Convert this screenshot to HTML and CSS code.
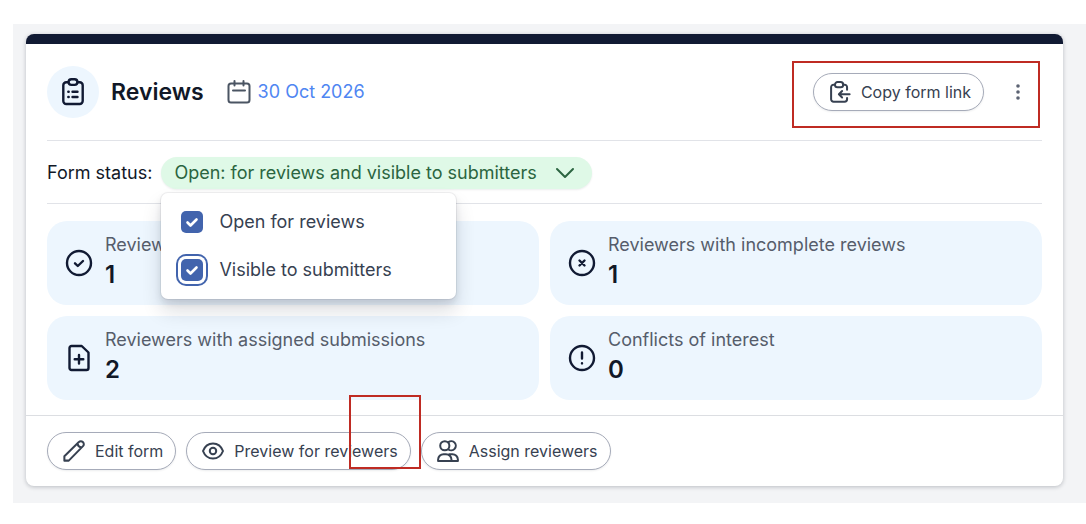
FILE: index.html
```html
<!DOCTYPE html>
<html lang="en">
<head>
<meta charset="utf-8">
<title>Reviews</title>
<link rel="stylesheet" href="styles.css">
</head>
<body>
<main class="page">
  <section class="card">
    <header class="card-header">
      <span class="badge">
        <svg class="icon-clipboard" viewBox="0 0 22 28" aria-hidden="true"><rect x="1.300" y="4.300" width="19.400" height="21.700" rx="3"/><rect class="badge-clip" x="6.600" y="1.300" width="8.800" height="5.600" rx="2.800"/><path d="M6.300 13.800h.4M10.500 13.800h5M6.300 19h.4M10.500 19h5"/></svg>
      </span>
      <h1 class="title">Reviews</h1>
      <a class="date" href="#">
        <svg class="icon-calendar" viewBox="0 0 24 24" aria-hidden="true"><rect x="1.500" y="3.500" width="21" height="19" rx="2.500"/><path d="M7.500 1v4.500M16.500 1v4.500M6 10.500h12"/></svg>
        30 Oct 2026
      </a>
      <div class="header-actions">
        <button class="btn" type="button">
          <svg class="icon" viewBox="0 0 24 24" aria-hidden="true"><path d="M6.500 4H5a2.700 2.700 0 0 0-2.700 2.700V20A2.700 2.700 0 0 0 5 22.700h12a2.700 2.700 0 0 0 2.700-2.700v-1.500M15.500 4H17a2.700 2.700 0 0 1 2.700 2.700V9.500"/><rect x="6.500" y="1.200" width="9" height="5.600" rx="2.800"/><path d="M22.500 14.500H11M14.300 11 10.800 14.500l3.500 3.500"/></svg>
          Copy form link
        </button>
        <button class="more" type="button" aria-label="More actions">
          <svg class="icon-more" viewBox="0 0 4 18" aria-hidden="true"><circle cx="2" cy="3" r="1.800"/><circle cx="2" cy="9" r="1.800"/><circle cx="2" cy="15" r="1.800"/></svg>
        </button>
      </div>
    </header>

    <div class="status">
      <span id="status-label">Form status:</span>
      <div class="dropdown">
        <button class="pill" type="button" aria-expanded="true" aria-describedby="status-label">
          Open: for reviews and visible to submitters
          <svg class="icon-chevron" viewBox="0 0 20 12" aria-hidden="true"><path d="M2 2l8 8 8-8"/></svg>
        </button>
        <div class="menu">
          <label class="option">
            <span class="check"><input class="box" type="checkbox" checked><svg class="tick" viewBox="0 0 22 22" aria-hidden="true"><path d="m6.500 11.500 3 3L15.500 8.500"/></svg></span>
            Open for reviews
          </label>
          <label class="option">
            <span class="check"><input class="box box-focused" type="checkbox" checked><svg class="tick" viewBox="0 0 22 22" aria-hidden="true"><path d="m6.500 11.500 3 3L15.500 8.500"/></svg></span>
            Visible to submitters
          </label>
        </div>
      </div>
    </div>

    <div class="stats">
      <div class="stat">
        <svg class="stat-icon" viewBox="0 0 28 28" aria-hidden="true"><circle cx="14" cy="14" r="12"/><path d="m10 14.300 2.800 2.700 5.200-5"/></svg>
        <dl class="stat-text"><dt>Reviewers with complete reviews</dt><dd>1</dd></dl>
      </div>
      <div class="stat">
        <svg class="stat-icon" viewBox="0 0 28 28" aria-hidden="true"><circle cx="14" cy="14" r="12"/><path d="m11.500 11.500 5 5M16.500 11.500l-5 5"/></svg>
        <dl class="stat-text"><dt>Reviewers with incomplete reviews</dt><dd>1</dd></dl>
      </div>
      <div class="stat">
        <svg class="stat-icon" viewBox="0 0 28 28" aria-hidden="true"><path d="M6.500 2h10.200L23.500 8.500V24a2 2 0 0 1-2 2h-15a2 2 0 0 1-2-2V4a2 2 0 0 1 2-2ZM14 11v8.600M9.700 15.300h8.600"/></svg>
        <dl class="stat-text"><dt>Reviewers with assigned submissions</dt><dd>2</dd></dl>
      </div>
      <div class="stat">
        <svg class="stat-icon" viewBox="0 0 28 28" aria-hidden="true"><circle cx="14" cy="14" r="12"/><path d="M14 8.500v6M14 19.200v.2"/></svg>
        <dl class="stat-text"><dt>Conflicts of interest</dt><dd>0</dd></dl>
      </div>
    </div>

    <footer class="card-footer">
      <button class="btn" type="button">
        <svg class="icon" viewBox="0 0 24 24" aria-hidden="true"><path d="M1.500 22.500v-4.800L17.300 2.200a3 3 0 0 1 4.300 0l.2.200a3 3 0 0 1 0 4.300L6.300 22.500ZM16 3.700c.2 2.700 1.700 4.200 4.300 4.400"/></svg>
        Edit form
      </button>
      <button class="btn" type="button">
        <svg class="icon" viewBox="0 0 24 24" aria-hidden="true"><path d="M1.100 12C3 7 7.300 3.800 12 3.800S21 7 22.900 12c-1.900 5-6.200 8.200-10.900 8.200S3 17 1.100 12Z"/><circle cx="12" cy="12" r="3.500"/></svg>
        Preview for reviewers
      </button>
      <button class="btn" type="button">
        <svg class="icon" viewBox="0 0 24 24" aria-hidden="true"><circle cx="8.500" cy="6.300" r="5"/><path d="M12.500 2.300a5 5 0 1 1 0 8M1.200 22.800v-1.300a6 6 0 0 1 6-6h2.600a6 6 0 0 1 6 6v1.300ZM13.500 15.500h3.300a6 6 0 0 1 6 6v1.300h-7"/></svg>
        Assign reviewers
      </button>
    </footer>
  </section>
</main>
<div class="highlight highlight-link"></div>
<div class="highlight highlight-preview"></div>
</body>
</html>
```
FILE: styles.css
```css
* { box-sizing: border-box; }

body {
  margin: 0;
  padding: 24px 0 20px 13px;
  background: #fff;
  color: #111827;
  font: 18px/24px Inter, sans-serif;
}

svg {
  flex: none;
  fill: none;
  stroke: currentColor;
  stroke-width: 2;
  stroke-linecap: round;
  stroke-linejoin: round;
}

button { font: inherit; cursor: pointer; }

.page {
  padding: 10px 23px 17px 13px;
  background: #f3f4f6;
}

.card {
  border-top: 10px solid #111a33;
  border-radius: 8px;
  background: #fff;
  box-shadow: 0 1px 4px rgba(17, 24, 39, 0.25);
}

.card-header {
  display: flex;
  align-items: center;
  margin: 0 21px;
  padding: 22px 0;
  border-bottom: 1px solid #e1e3e8;
}

.badge {
  display: grid;
  place-items: center;
  width: 52px;
  height: 52px;
  border-radius: 50%;
  background: #edf6fe;
  color: #111a33;
}

.icon-clipboard { width: 22px; height: 28px; stroke-width: 2.4; }
.badge-clip { fill: #edf6fe; }

.title {
  margin: 0 0 0 12px;
  font-size: 23px;
  font-weight: 600;
  line-height: 32px;
}

.date {
  display: flex;
  align-items: center;
  gap: 7px;
  margin-left: 23px;
  color: #4f86f2;
  text-decoration: none;
}

.icon-calendar { width: 24px; height: 24px; color: #4b5563; }

.header-actions {
  display: flex;
  align-items: center;
  gap: 24px;
  margin-left: auto;
}

.btn {
  display: flex;
  align-items: center;
  gap: 10px;
  height: 38px;
  padding: 0 12px 0 15px;
  border: 1px solid #a6abb9;
  border-radius: 19px;
  background: #fff;
  box-shadow: 0 1px 2px rgba(17, 24, 39, 0.08);
  color: #374151;
  font-size: 16px;
}

.icon { width: 22px; height: 22px; stroke-width: 2.2; }

.more {
  display: grid;
  place-items: center;
  padding: 8px;
  margin-right: 14px;
  border: 0;
  background: none;
  color: #5c6373;
}

.icon-more { width: 4px; height: 18px; fill: currentColor; stroke: none; }

.status {
  display: flex;
  align-items: center;
  gap: 9px;
  margin: 0 21px;
  padding: 16px 0 14px;
  border-bottom: 1px solid #e1e3e8;
}

.dropdown { position: relative; }

.pill {
  display: flex;
  align-items: center;
  gap: 18px;
  height: 32px;
  padding: 0 17px 0 13px;
  border: 0;
  border-radius: 16px;
  background: #dff9e7;
  box-shadow: 0 1px 2px rgba(17, 24, 39, 0.08);
  color: #2b6540;
}

.icon-chevron { width: 20px; height: 12px; }

.menu {
  position: absolute;
  top: 36px;
  left: 0;
  z-index: 1;
  display: grid;
  gap: 24px;
  width: 295px;
  padding: 17px 20px;
  border-radius: 7px;
  background: #fff;
  box-shadow: 0 0 0 1px rgba(17, 24, 39, 0.06), 0 12px 20px rgba(17, 24, 39, 0.14), 0 4px 7px rgba(17, 24, 39, 0.1);
}

.option {
  display: flex;
  align-items: center;
  gap: 16px;
  color: #374151;
}

.check { display: grid; }

.box {
  grid-area: 1 / 1;
  width: 22px;
  height: 22px;
  margin: 0;
  appearance: none;
  border-radius: 5px;
  background: #4264ad;
}

.box-focused { box-shadow: 0 0 0 3px #fff, 0 0 0 5px #4264ad; }

.tick {
  grid-area: 1 / 1;
  width: 22px;
  height: 22px;
  color: #fff;
  stroke-width: 2.6;
  pointer-events: none;
}

.stats {
  display: grid;
  grid-template-columns: 1fr 1fr;
  gap: 11px;
  padding: 17px 21px 15px;
}

.stat {
  display: flex;
  align-items: center;
  gap: 12px;
  padding: 12px 18px;
  border-radius: 20px;
  background: #edf6fe;
}

.stat-icon { width: 28px; height: 28px; color: #111a33; stroke-width: 2.4; }

.stat-text { margin: 0; }
.stat-text dt { color: #565d6b; }

.stat-text dd {
  margin: 2px 0;
  font-size: 24px;
  font-weight: 600;
  line-height: 32px;
}

.card-footer {
  display: flex;
  gap: 10px;
  padding: 16px 21px;
  border-top: 1px solid #dcdee2;
}

.highlight {
  position: absolute;
  border: 2px solid #bf2b23;
  pointer-events: none;
}

.highlight-link { top: 61px; right: 46px; width: 248px; height: 67px; }
.highlight-preview { top: 395px; left: 349px; width: 72px; height: 74px; }
```
